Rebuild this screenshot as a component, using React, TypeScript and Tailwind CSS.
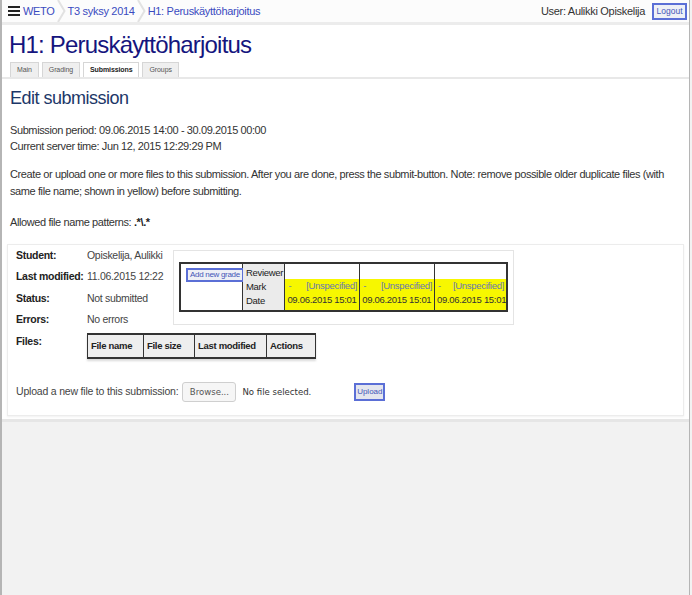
import { useState } from "react";

const GRADES = [
  { mark: "[Unspecified]", date: "09.06.2015 15:01", w: "w-[76px]" },
  { mark: "[Unspecified]", date: "09.06.2015 15:01", w: "w-[76px]" },
  { mark: "[Unspecified]", date: "09.06.2015 15:01", w: "w-[71px]" },
];

const TABS = ["Main", "Grading", "Submissions", "Groups"];

const INFO = [
  ["Student:", "Opiskelija, Aulikki"],
  ["Last modified:", "11.06.2015 12:22"],
  ["Status:", "Not submitted"],
  ["Errors:", "No errors"],
];

const FILE_COLS = [
  ["File name", "w-[56px]"],
  ["File size", "w-[51px]"],
  ["Last modified", "w-[72px]"],
  ["Actions", "w-[48px]"],
];

function Crumb({ label, last }: { label: string; last?: boolean }) {
  return (
    <div className="flex items-center h-full">
      <span className="px-[2px] text-[#3a4bc0]">{label}</span>
      {!last && (
        <svg width="9" height="22" viewBox="0 0 9 22" className="shrink-0">
          <path d="M1 0 L7.5 11 L1 22" fill="none" stroke="#e2e2e2" strokeWidth="2" />
        </svg>
      )}
    </div>
  );
}

export default function App() {
  const [active] = useState("Submissions");

  return (
    <div className="w-[692px] h-[595px] bg-[#f2f2f2] font-['Liberation_Sans',Arial,sans-serif] text-[#333]">
      <div className="w-[690px] h-full border-l-2 border-r border-[#b5b5b5]">
        <div className="bg-white border-b-[3px] border-[#e6e6e6]">
          {/* Header */}
          <div className="h-[25px] flex items-center justify-between border-b-[3px] border-[#ececec] bg-[#fcfcfc] text-[11px] tracking-[-0.3px]">
            <div className="flex items-center h-full pl-[6px]">
              <svg width="12" height="10" viewBox="0 0 12 10" className="mr-[1px]">
                <rect x="0" y="0" width="12" height="2" fill="#222" />
                <rect x="0" y="4" width="12" height="2" fill="#222" />
                <rect x="0" y="8" width="12" height="2" fill="#222" />
              </svg>
              <Crumb label="WETO" />
              <Crumb label="T3 syksy 2014" />
              <Crumb label="H1: Peruskäyttöharjoitus" last />
            </div>
            <div className="flex items-center gap-[7px] pr-[2px]">
              <span className="text-[#333]">User: Aulikki Opiskelija</span>
              <button className="h-[17px] w-[35px] border-2 border-[#5b6fd6] bg-[#eef0f6] text-[8.5px] tracking-normal text-[#4457b8] leading-none">
                Logout
              </button>
            </div>
          </div>

          {/* Title + tabs */}
          <div className="px-[7px] pt-[5px]">
            <h1 className="text-[24px] leading-[30px] tracking-[-0.8px] text-[#15157e]">H1: Peruskäyttöharjoitus</h1>
          </div>
          <div className="flex gap-[3px] px-[8px] mt-[2px] border-b-2 border-[#e8e8e8]">
            {TABS.map((t) => (
              <div
                key={t}
                className={`h-[15px] px-[6px] flex items-center text-[7px] tracking-[-0.1px] border border-b-0 border-[#d6d6d6] ${
                  t === active ? "bg-white font-bold text-[#222]" : "bg-[#efefef] text-[#555]"
                }`}
              >
                {t}
              </div>
            ))}
          </div>

          {/* Content */}
          <div className="px-[8px] pt-[7px] text-[11px] leading-[16px] tracking-[-0.4px]">
            <h2 className="text-[18px] leading-[24px] tracking-[-0.5px] text-[#1c3768]">Edit submission</h2>
            <p className="mt-[12px]">
              Submission period: 09.06.2015 14:00 - 30.09.2015 00:00
              <br />
              Current server time: Jun 12, 2015 12:29:29 PM
            </p>
            <p className="mt-[12px] leading-[17px]">
              Create or upload one or more files to this submission. After you are done, press the submit-button. Note:
              remove possible older duplicate files (with same file name; shown in yellow) before submitting.
            </p>
            <p className="mt-[14px]">
              Allowed file name patterns: <b className="text-[#222]">.*\.*</b>
            </p>
          </div>

          {/* Submission panel */}
          <div className="mx-[5px] mt-[14px] mb-[3px] border border-[#ececec] shadow-[0_1px_2px_rgba(0,0,0,0.06)] pl-[8px] pb-[13px] text-[10.5px] tracking-[-0.3px]">
            <div className="flex">
              <div className="w-[157px] shrink-0">
                {INFO.map(([k, v]) => (
                  <div key={k} className="flex h-[21.5px] items-center">
                    <span className="w-[71px] shrink-0 font-bold text-[#222] whitespace-nowrap">{k}</span>
                    <span className="whitespace-nowrap text-[#444]">{v}</span>
                  </div>
                ))}
              </div>

              {/* Grade box */}
              <div className="mt-[5px] w-[341px] h-[75px] border border-[#e4e4e4] px-[5px] pt-[11px]">
                <div className="flex border-2 border-[#333] h-[50px] text-[9.5px] leading-[14px]">
                  <div className="w-[62px] border-r border-[#333] bg-white pt-[3px] pl-[5px]">
                    <button className="h-[14px] px-[2px] border-2 border-[#5b6fd6] bg-[#eef0f6] text-[8px] text-[#4457b8] leading-none whitespace-nowrap">
                      Add new grade
                    </button>
                  </div>
                  <div className="w-[43px] bg-[#ebebeb] border-r border-[#333] pl-[3px] pt-[2px] text-[#222]">
                    <div>Reviewer</div>
                    <div>Mark</div>
                    <div>Date</div>
                  </div>
                  {GRADES.map((g, i) => (
                    <div key={i} className={`${g.w} flex flex-col ${i < 2 ? "border-r border-[#333]" : ""}`}>
                      <div className="h-[15px] bg-white" />
                      <div className="flex-1 bg-[#f7f700] px-[2px] text-[#333]">
                        <div className="flex justify-between text-[#6877b0]">
                          <span className="pl-[1px]">-</span>
                          <span>{g.mark}</span>
                        </div>
                        <div className="whitespace-nowrap">{g.date}</div>
                      </div>
                    </div>
                  ))}
                </div>
              </div>
            </div>

            {/* Files */}
            <div className="flex mt-[1px]">
              <span className="w-[71px] shrink-0 font-bold text-[#222] leading-[18px]">Files:</span>
              <div className="mt-[1px] flex border-y-2 border-x border-[#333] bg-[#eeeeee] shadow-[0_2px_2px_rgba(0,0,0,0.15)] h-[26px] text-[9.5px] font-bold text-[#222]">
                {FILE_COLS.map(([t, w], i) => (
                  <div key={t} className={`${w} flex items-center pl-[3px] whitespace-nowrap ${i < 3 ? "border-r border-[#333]" : ""}`}>
                    {t}
                  </div>
                ))}
              </div>
            </div>

            {/* Upload */}
            <div className="flex items-center mt-[23px] text-[#444] tracking-[-0.2px]">
              <span className="whitespace-nowrap">Upload a new file to this submission:</span>
              <button className="ml-[4px] h-[20px] w-[54px] rounded-[3px] border border-[#cfcfcf] bg-[#f6f6f6] font-['DejaVu_Sans_Condensed','DejaVu_Sans',sans-serif] text-[9.5px] tracking-normal text-[#555]">
                Browse...
              </button>
              <span className="ml-[6px] font-['DejaVu_Sans_Condensed','DejaVu_Sans',sans-serif] text-[9.5px] tracking-normal text-[#333]">
                No file selected.
              </span>
              <button className="ml-[43px] h-[18px] w-[31px] border-2 border-[#5b6fd6] bg-[#e4e6ee] text-[8px] tracking-normal text-[#4457b8] leading-none">
                Upload
              </button>
            </div>
          </div>
        </div>
      </div>
    </div>
  );
}
